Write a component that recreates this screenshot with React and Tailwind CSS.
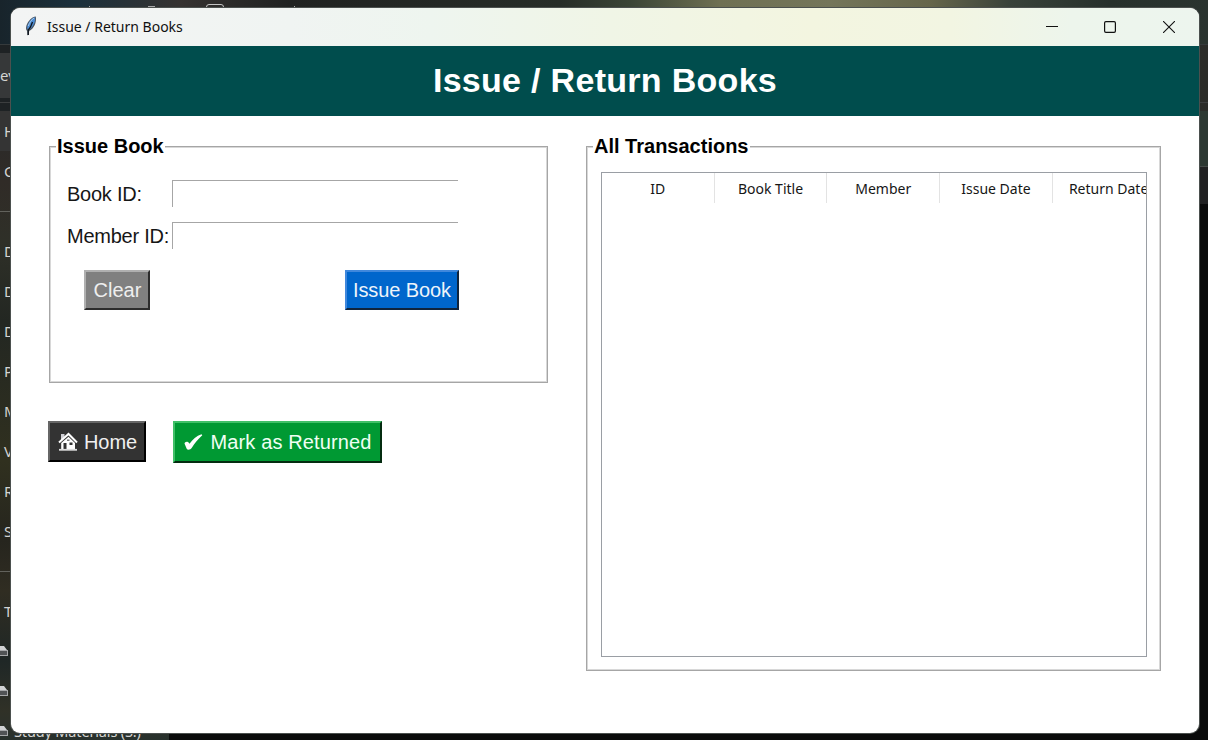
import React from "react";

const places = ["H", "G", "-", "D", "D", "D", "P", "M", "V", "R", "S", "-", "T"];

function Drive() {
  return (
    <svg className="block h-[10px] w-2 shrink-0" viewBox="0 0 8 10">
      <path d="M0 0H4L7 4H0Z" fill="#d0d2d4" />
      <path d="M0 4H8V10H0Z" fill="#a5a7a9" />
      <path d="M0 5H7V9H0Z" fill="#505355" />
    </svg>
  );
}

function Explorer() {
  return (
    <div className="absolute inset-0 flex flex-col bg-[#0a0b0b] text-[15px] leading-5 text-[#d4d4d2]">
      <div className="flex h-[44px] shrink-0 justify-start bg-[linear-gradient(90deg,#18242b_0,#1b303c_75px,#353231_180px,#202221_290px,#272d28_560px,#3a4435_630px,#6f7053_720px,#74755a_830px,#66664b_930px,#39423a_1010px,#27302c_1110px,#2a342f_1208px)]">
        <div className="flex w-full">
          <span className="ml-[30px] mt-[7px] h-px w-px bg-[#aaa]" />
          <span className="ml-[58px] mt-[6px] h-[3px] w-px bg-[#aaa]" />
          <span className="ml-[58px] mt-[6px] h-[2px] w-[7px] bg-[#aaa]" />
          <span className="ml-[51px] mt-[4px] h-4 w-[18px] rounded-[3px] border border-[#c4c4c4]" />
          <span className="ml-[70px] mt-[6px] h-[3px] w-px bg-[#aaa]" />
        </div>
      </div>
      <div className="flex h-[67px] shrink-0 flex-col border-t border-[#353a3c] bg-[linear-gradient(90deg,#1e2224_0,#1e2224_50%,#2b2c29_100%)] pt-2">
        <div className="flex h-[45px] items-center bg-[linear-gradient(90deg,#363839_0,#363839_50%,#2b2c29_100%)] pb-[2px]">ev</div>
        <div className="mt-1 h-px bg-[#3c3e3f]" />
      </div>
      <div className="flex min-h-0 flex-1 justify-between">
        <div className="flex w-[169px] flex-col bg-[linear-gradient(180deg,#292a2a_0,#302b27_70px,#2f3028_130px,#232722_210px,#30301f_350px,#26251e_430px,#302d22_480px,#1f2726_550px,#303127_600px,#28312d_629px)]">
          {places.map((name, i) =>
            name === "-" ? (
              <div key={i} className="flex h-10 shrink-0 items-center">
                <div className="h-px w-full bg-[#62625c]" />
              </div>
            ) : (
              <div key={i} className={`flex h-10 shrink-0 items-center pb-px pl-[4px] ${i === 0 ? "bg-[#343434]" : ""}`}>{name}</div>
            ),
          )}
          <div className="flex h-10 shrink-0 items-center"><Drive /></div>
          <div className="flex h-10 shrink-0 items-center"><Drive /></div>
          <div className="flex h-10 shrink-0 items-center gap-[6px] whitespace-nowrap"><Drive /><span className="text-[14.500px] tracking-[-0.150px]">Study Materials (S:)</span></div>
        </div>
        <div className="flex w-10 flex-col">
          <div className="h-[55px] bg-[#2c3832]" />
          <div className="h-[38px] border-t border-[#454b49] bg-[#202122]" />
        </div>
      </div>
    </div>
  );
}

function Feather() {
  return (
    <svg className="h-5 w-3 shrink-0" viewBox="0 0 12 20">
      <path d="M10.800 .4C7 .7 3.200 4.700 1.500 9.300c-.8 2.700-.6 4.800.6 5.700l.2 4.200 1.300-.2.600-4C8.800 12.800 11.900 6.500 10.800.4Z" fill="#4b5562" />
      <path d="M10 1.200C6.500 2.200 3.700 5.800 2.500 9.700c-.4 1.500-.4 2.700.3 4L4.600 13.300C8.200 10.800 10.600 5.700 10 1.200Z" fill="#4c8dd5" />
      <path d="M9 2C6.700 3.500 4.500 6.500 3.300 10" stroke="#a6c9ec" strokeWidth="1" fill="none" />
      <path d="M7.500 6 5.500 11 3.300 14V19" stroke="#10151c" strokeWidth="1.300" fill="none" />
    </svg>
  );
}

function TitleBar() {
  return (
    <div className="flex h-[38px] shrink-0 items-center bg-[linear-gradient(90deg,#f3f4f4_0,#f0f4f2_280px,#eef5ef_420px,#f0f5e6_600px,#f3f5e0_800px,#f2f5e2_940px,#edf5ec_1060px,#edf5ee_1188px)] pl-[14px]">
      <div className="flex pb-[2px]"><Feather /></div>
      <span className="ml-[10px] flex-1 whitespace-nowrap pb-px text-[14px] text-[#101010]">Issue / Return Books</span>
      <div className="mr-6 flex items-center">
        <svg className="mr-[46px] h-3 w-3" viewBox="0 0 12 12"><path d="M0 5.500H12" stroke="#111" /></svg>
        <svg className="mr-[47px] h-3 w-3" viewBox="0 0 12 12"><rect x=".6" y=".6" width="10.800" height="10.800" rx="1.300" fill="none" stroke="#111" strokeWidth="1.200" /></svg>
        <svg className="h-3 w-3" viewBox="0 0 12 12"><path d="M0 0 12 12M12 0 0 12" stroke="#111" strokeWidth="1.100" /></svg>
      </div>
    </div>
  );
}

function Field({ label }) {
  return (
    <label className="flex h-[27px] items-center">
      <span className="w-[105px] shrink-0 whitespace-nowrap text-[20px] tracking-[-0.250px] text-[#161616]">{label}</span>
      <input className="h-[27px] w-[286px] border-l border-t border-[#a6a6a6] bg-white outline-none" />
    </label>
  );
}

function House() {
  return (
    <svg className="h-[19px] w-5 shrink-0" viewBox="0 0 20 19">
      <path d="M3 2h3.500v3L3 8Z" fill="#cfcfd4" />
      <path d="M1 10.500 10.500 2 19 10.500" fill="none" stroke="#fff" strokeWidth="2" />
      <path d="M3.200 11 10.500 4.800 17 11V17H3.200Z" fill="#fff" />
      <path d="M5.500 11H8.500V17H5.500ZM11.500 10.500H14.500V13H11.500Z" fill="#333" />
      <path d="M9 7.500H11.500V9H9Z" fill="#777" />
      <path d="M1 17.800H19" stroke="#ddd" strokeWidth="1.800" />
    </svg>
  );
}

const columns = ["ID", "Book Title", "Member", "Issue Date", "Return Date"];

export default function App() {
  return (
    <div className="relative h-[740px] w-[1208px] overflow-hidden font-['Noto_Sans',sans-serif]">
      <Explorer />
      <div className="absolute left-[11px] top-[8px] flex h-[725px] w-[1188px] flex-col overflow-hidden rounded-[9px] bg-white shadow-[0_0_0_1px_#4b504e]">
        <TitleBar />
        <header className="flex h-[70px] shrink-0 items-center justify-center bg-[#004d4d] pb-px font-['Liberation_Sans',Arial,sans-serif]">
          <h1 className="whitespace-nowrap text-[34px] font-bold tracking-[0.300px] text-white">Issue / Return Books</h1>
        </header>
        <main className="flex flex-1 items-start gap-[38px] pl-[38px] pt-[18px] font-['Liberation_Sans',Arial,sans-serif]">
          <div className="flex w-[499px] flex-col">
            <fieldset className="h-[249px] border border-[#a6a6a6] pl-[17px] shadow-[inset_0_0_0_1px_#d8d8d8]">
              <legend className="ml-[-11px] h-6 whitespace-nowrap bg-white px-px text-[20px] font-bold leading-6 text-black">Issue Book</legend>
              <div className="mt-[22px] flex flex-col gap-[15px]">
                <Field label="Book ID:" />
                <Field label="Member ID:" />
              </div>
              <div className="ml-[17px] mt-[21px] flex w-[375px] justify-between text-[20px]">
                <button className="h-[40px] w-[66px] border-2 border-b-[#2c2c2c] border-l-[#b0b0b0] border-r-[#2c2c2c] border-t-[#b0b0b0] bg-[#808080] pl-px text-[#eee]">Clear</button>
                <button className="h-[40px] w-[114px] whitespace-nowrap border-2 border-b-[#10243c] border-l-[#4088dc] border-r-[#10243c] border-t-[#4088dc] bg-[#0066cc] tracking-[-0.100px] text-[#eef4fa]">Issue Book</button>
              </div>
            </fieldset>
            <div className="mt-[38px] flex items-start gap-[27px] text-[20px]">
              <button className="ml-[-1px] flex h-[41px] w-[98px] items-center justify-center gap-[6px] border-2 border-b-black border-l-[#666] border-r-black border-t-[#666] bg-[#333] pl-px text-[#f0f0f0]"><House /><span className="tracking-[-0.100px]">Home</span></button>
              <button className="flex h-[42px] w-[209px] items-center justify-center gap-2 whitespace-nowrap border-2 border-b-[#042c10] border-l-[#40c068] border-r-[#042c10] border-t-[#40c068] bg-[#009933] text-[#f0fff4]">
                <svg className="h-[17px] w-[19px] shrink-0" viewBox="0 0 19 17"><path d="M.5 9.500C1 7.700 3.800 6.800 5.500 9.700 8.500 5.500 12.500 2 17.500.3L18.300 1.200C13.500 5.500 10.500 9.500 8 13.500 6.500 16 3.500 16.200 2.700 14.800Z" fill="#fff" /></svg>
                <span className="tracking-[0.120px]">Mark as Returned</span>
              </button>
            </div>
          </div>
          <fieldset className="h-[537px] w-[575px] border border-[#a6a6a6] pl-[14px] shadow-[inset_0_0_0_1px_#d8d8d8]">
            <legend className="ml-[-8px] h-6 whitespace-nowrap bg-white px-px text-[20px] font-bold leading-6 text-black">All Transactions</legend>
            <div className="mt-[14px] h-[485px] w-[546px] overflow-hidden border border-[#9a9ea4]">
              <div className="flex h-[31px] w-[565px] pb-px font-['Noto_Sans',sans-serif] text-[14px] text-[#161616]">
                {columns.map((c) => (
                  <div key={c} className="flex w-[112.700px] shrink-0 items-center justify-center whitespace-nowrap border-r border-[#e3e3e3]">{c}</div>
                ))}
              </div>
            </div>
          </fieldset>
        </main>
      </div>
    </div>
  );
}
